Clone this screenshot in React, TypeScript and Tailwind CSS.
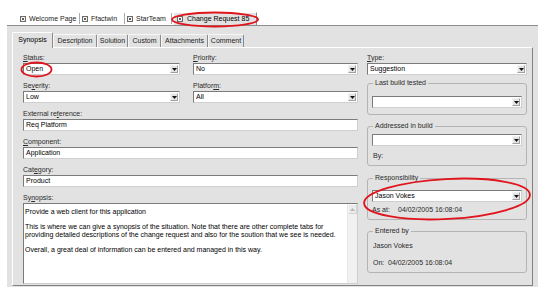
import React from 'react';

const CloseBox = () => (
    <svg width="6" height="6" viewBox="0 0 6 6" className="shrink-0">
        <rect x="0.5" y="0.5" width="5" height="5" fill="#fff" stroke="#6b6b6b" />
        <path d="M1.8 1.8L4.2 4.2M4.2 1.8L1.8 4.2" stroke="#333" strokeWidth="0.8" />
    </svg>
);

const Select: React.FC<{ value?: string; className?: string }> = ({ value = '', className = '' }) => (
    <div className={`flex h-[12px] bg-white border border-[#7b7b7b] border-r-[#cfcfcf] border-b-[#cfcfcf] ${className}`}>
        <span className="flex-1 pl-[2px] leading-[10px] text-black truncate">{value}</span>
        <span className="flex items-center justify-center w-[8px] my-[1px] mr-[1px] bg-[#e4e4e4] border border-[#f4f4f4] border-r-[#a0a0a0] border-b-[#a0a0a0]">
            <svg width="5" height="3" viewBox="0 0 5 3">
                <path d="M0 0h5L2.5 3z" fill="#111" />
            </svg>
        </span>
    </div>
);

const Input: React.FC<{ value: string }> = ({ value }) => (
    <div className="h-[12px] bg-white border border-[#7b7b7b] border-r-[#cfcfcf] border-b-[#cfcfcf] pl-[2px] leading-[10px] text-black">
        {value}
    </div>
);

const Label: React.FC<{ children: React.ReactNode }> = ({ children }) => (
    <div className="h-[9px] leading-[9px] mb-[1px] text-[#2a2a2a]">{children}</div>
);

const Group: React.FC<{ title: string; className: string; children: React.ReactNode }> = ({ title, className, children }) => (
    <fieldset className={`border border-[#b4b4b4] rounded-[3px] px-[4px] min-w-0 ${className}`}>
        <legend className="ml-[1px] px-[2px] h-[8px] leading-[8px] text-[#2a2a2a]">{title}</legend>
        {children}
    </fieldset>
);

const docTabs = [
    { name: 'Welcome Page', w: 'w-[62px]' },
    { name: 'Ffactwin', w: 'w-[45px]' },
    { name: 'StarTeam', w: 'w-[47px]' },
];

const subTabs = [
    { name: 'Description', w: 'w-[44px]' },
    { name: 'Solution', w: 'w-[31px]' },
    { name: 'Custom', w: 'w-[33px]' },
    { name: 'Attachments', w: 'w-[47px]' },
    { name: 'Comment', w: 'w-[36px]' },
];

export default function App() {
    return (
        <div className="relative w-[541px] h-[292px] bg-white overflow-hidden text-[7px] text-[#1c1c1c] font-['Liberation_Sans',Arial,sans-serif]">
            {/* document tabs */}
            <div className="flex items-end h-[25px] pl-[18px]">
                {docTabs.map((t) => (
                    <div key={t.name} className={`flex items-center gap-[3px] h-[11px] mb-[1px] pl-[2px] border-r border-[#a9a9a9] ${t.w}`}>
                        <CloseBox />
                        <span className="leading-[11px]">{t.name}</span>
                    </div>
                ))}
                <div className="flex items-center gap-[4px] w-[84px] h-[13px] ml-[1px] pl-[3px] bg-[#e2e2e2] border-t border-l border-white border-r border-r-[#8a8a8a]">
                    <CloseBox />
                    <span className="leading-[12px] text-black">Change Request 85</span>
                </div>
            </div>

            {/* main gray area */}
            <div className="ml-[7px] mr-[3px] h-[262px] bg-[#e2e2e2] border-t border-[#8d8d8d] pt-[6px] px-[5px]">
                <div className="flex items-end h-[15px]">
                    <div className="relative z-10 flex items-center justify-center w-[41px] h-[16px] -mb-[1px] bg-[#e2e2e2] border-t border-l border-white border-r border-r-[#8a8a8a] rounded-t-[2px] text-black">
                        Synopsis
                    </div>
                    {subTabs.map((t) => (
                        <div key={t.name} className={`flex items-center justify-center h-[13px] border-t border-l border-[#f7f7f7] border-r border-r-[#8a8a8a] rounded-t-[2px] ${t.w}`}>
                            {t.name}
                        </div>
                    ))}
                </div>

                <div className="h-[239px] border border-white border-r-[#808080] border-b-[#808080] pt-[5px] pl-[10px] pr-[5px] pb-[1px] flex gap-[9px]">
                    {/* left column */}
                    <div className="w-[335px] flex flex-col">
                        <div className="flex gap-[13px]">
                            <div className="w-[157px]">
                                <Label><u>S</u>tatus:</Label>
                                <Select value="Open" />
                            </div>
                            <div className="flex-1">
                                <Label><u>P</u>riority:</Label>
                                <Select value="No" />
                            </div>
                        </div>
                        <div className="flex gap-[13px] mt-[6px]">
                            <div className="w-[157px]">
                                <Label>Se<u>v</u>erity:</Label>
                                <Select value="Low" />
                            </div>
                            <div className="flex-1">
                                <Label>Platfor<u>m</u>:</Label>
                                <Select value="All" />
                            </div>
                        </div>
                        <div className="mt-[6px]">
                            <Label>External re<u>f</u>erence:</Label>
                            <Input value="Req Platform" />
                        </div>
                        <div className="mt-[6px]">
                            <Label><u>C</u>omponent:</Label>
                            <Input value="Application" />
                        </div>
                        <div className="mt-[6px]">
                            <Label>Cat<u>e</u>gory:</Label>
                            <Input value="Product" />
                        </div>
                        <div className="mt-[6px] flex-1 flex flex-col">
                            <Label>Sy<u>n</u>opsis:</Label>
                            <div className="flex-1 flex bg-white border border-[#7b7b7b] border-r-[#cfcfcf] border-b-[#cfcfcf]">
                                <div className="flex-1 pl-[1px] pt-[4px] leading-[8px] text-black">
                                    <p>Provide a web client for this application</p>
                                    <p className="mt-[7px]">This is where we can give a synopsis of the situation. Note that there are other complete tabs for</p>
                                    <p>providing detailed descriptions of the change request and also for the soution that we see is needed.</p>
                                    <p className="mt-[7px]">Overall, a great deal of information can be entered and managed in this way.</p>
                                </div>
                                <div className="w-[10px] bg-[#f1f1f1] border-l border-[#e6e6e6]">
                                    <div className="flex items-center justify-center h-[10px] bg-[#ececec] border border-[#f8f8f8] border-r-[#d2d2d2] border-b-[#d2d2d2]">
                                        <svg width="5" height="3" viewBox="0 0 5 3">
                                            <path d="M0 3h5L2.5 0z" fill="#b8b8b8" />
                                        </svg>
                                    </div>
                                </div>
                            </div>
                        </div>
                    </div>

                    {/* right column */}
                    <div className="w-[160px] flex flex-col">
                        <Label><u>T</u>ype:</Label>
                        <Select value="Suggestion" />

                        <Group title="Last build tested" className="mt-[4px] pt-[9px] pb-[6px]">
                            <Select />
                        </Group>

                        <Group title="Addressed in build" className="mt-[7px] pt-[4px] pb-[5px]">
                            <Select />
                            <div className="mt-[6px] h-[8px] leading-[8px] pl-[1px] text-[#2a2a2a]">By:</div>
                        </Group>

                        <Group title="Responsibility" className="mt-[8px] pt-[8px] pb-[5px]">
                            <Select value="Jason Vokes" />
                            <div className="flex mt-[4px] h-[8px] leading-[8px] text-[#2a2a2a]">
                                <span className="w-[26px]">As at:</span>
                                <span>04/02/2005 16:08:04</span>
                            </div>
                        </Group>

                        <Group title="Entered by" className="mt-[7px] pt-[7px] pb-[5px]">
                            <div className="h-[8px] leading-[8px] pl-[1px] text-[#2a2a2a]">Jason Vokes</div>
                            <div className="flex mt-[9px] h-[8px] leading-[8px] pl-[1px] text-[#2a2a2a]">
                                <span className="w-[15px]">On:</span>
                                <span>04/02/2005 16:08:04</span>
                            </div>
                        </Group>
                    </div>
                </div>
            </div>

            {/* red annotation marks */}
            <svg className="absolute inset-0 pointer-events-none" width="541" height="292" viewBox="0 0 541 292">
                <g fill="none" stroke="#e0141c" strokeWidth="1.8">
                    <ellipse cx="215" cy="19.5" rx="43" ry="7" />
                    <ellipse cx="36.5" cy="69.5" rx="15" ry="7" />
                    <ellipse cx="447" cy="199" rx="83" ry="20" transform="rotate(-3 447 199)" />
                </g>
            </svg>
        </div>
    );
}
